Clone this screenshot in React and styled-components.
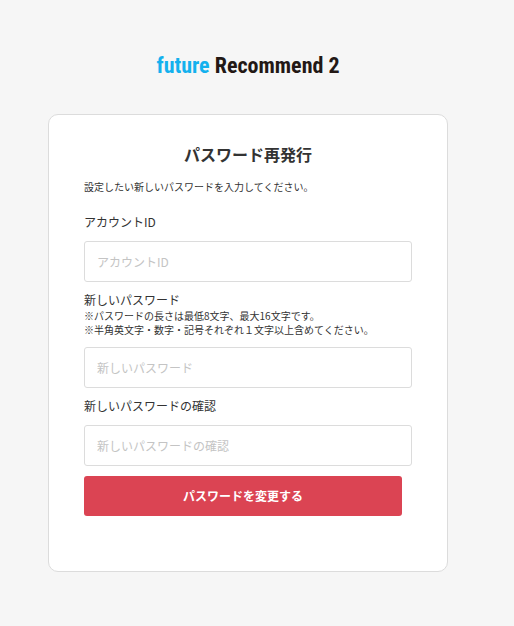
import React, { useState } from "react";
import styled, { createGlobalStyle } from "styled-components";

const colors = {
  page: "#f6f6f6",
  card: "#ffffff",
  border: "#dcdcdc",
  text: "#333333",
  placeholder: "#c4c4c4",
  danger: "#db4453",
  brand: "#14b1ee",
  ink: "#231815",
};

const fields = [
  { name: "account", label: "アカウントID", type: "text", notes: [] },
  {
    name: "password",
    label: "新しいパスワード",
    type: "password",
    notes: [
      "※パスワードの長さは最低8文字、最大16文字です。",
      "※半角英文字・数字・記号それぞれ１文字以上含めてください。",
    ],
  },
  {
    name: "confirm",
    label: "新しいパスワードの確認",
    type: "password",
    notes: [],
  },
];

const Field = ({ field, value, onChange }) => (
  <FieldGroup>
    <Label htmlFor={field.name}>{field.label}</Label>
    {field.notes.map((note) => (
      <Note key={note}>{note}</Note>
    ))}
    <Input
      id={field.name}
      name={field.name}
      type={field.type}
      placeholder={field.label}
      value={value}
      onChange={onChange}
    />
  </FieldGroup>
);

const App = () => {
  const [values, setValues] = useState({
    account: "",
    password: "",
    confirm: "",
  });

  const handleChange = (e) => {
    setValues({ ...values, [e.target.name]: e.target.value });
  };

  return (
    <>
      <GlobalStyle />
      <Page>
        <Logo>
          <span>future</span> Recommend 2
        </Logo>
        <Card onSubmit={(e) => e.preventDefault()}>
          <Title>パスワード再発行</Title>
          <Description>設定したい新しいパスワードを入力してください。</Description>
          {fields.map((field) => (
            <Field
              key={field.name}
              field={field}
              value={values[field.name]}
              onChange={handleChange}
            />
          ))}
          <SubmitButton type="submit">パスワードを変更する</SubmitButton>
        </Card>
      </Page>
    </>
  );
};

export default App;

const GlobalStyle = createGlobalStyle`
  * {
    box-sizing: border-box;
  }

  body {
    margin: 0;
    background: ${colors.page};
    color: ${colors.text};
    font-family: "Noto Sans CJK JP", sans-serif;
  }
`;

const Page = styled.main`
  display: flex;
  flex-direction: column;
  align-items: center;
  padding: 50px 66px 54px 48px;
`;

const Logo = styled.div`
  margin-bottom: 32px;
  color: ${colors.ink};
  font-family: "Roboto Condensed", "Liberation Sans Narrow", "Liberation Sans", sans-serif;
  font-size: 22px;
  font-weight: 700;
  line-height: 32px;
  white-space: nowrap;

  span {
    color: ${colors.brand};
  }
`;

const Card = styled.form`
  width: 100%;
  max-width: 400px;
  padding: 27px 35px 55px;
  background: ${colors.card};
  border: 1px solid ${colors.border};
  border-radius: 10px;
`;

const Title = styled.h1`
  margin: 0 0 14px;
  font-size: 16px;
  font-weight: 700;
  line-height: 24px;
  text-align: center;
`;

const Description = styled.p`
  margin: 0 0 20px;
  font-size: 10px;
  line-height: 14px;
`;

const FieldGroup = styled.div`
  margin-bottom: 10px;
`;

const Label = styled.label`
  display: block;
  padding-bottom: 2px;
  font-size: 12px;
  line-height: 15px;
`;

const Note = styled.p`
  margin: 0;
  font-size: 10px;
  line-height: 14px;
`;

const Input = styled.input`
  display: block;
  width: 100%;
  height: 41px;
  margin-top: 10px;
  padding: 0 12px;
  background: ${colors.card};
  border: 1px solid ${colors.border};
  border-radius: 3px;
  color: ${colors.text};
  font-family: inherit;
  font-size: 12px;

  &::placeholder {
    color: ${colors.placeholder};
    opacity: 1;
  }
`;

const SubmitButton = styled.button`
  display: block;
  width: calc(100% - 10px);
  height: 40px;
  padding: 0 0 2px;
  background: ${colors.danger};
  border: 0;
  border-radius: 3px;
  color: #ffffff;
  font-family: inherit;
  font-size: 12px;
  font-weight: 700;
  cursor: pointer;
`;
